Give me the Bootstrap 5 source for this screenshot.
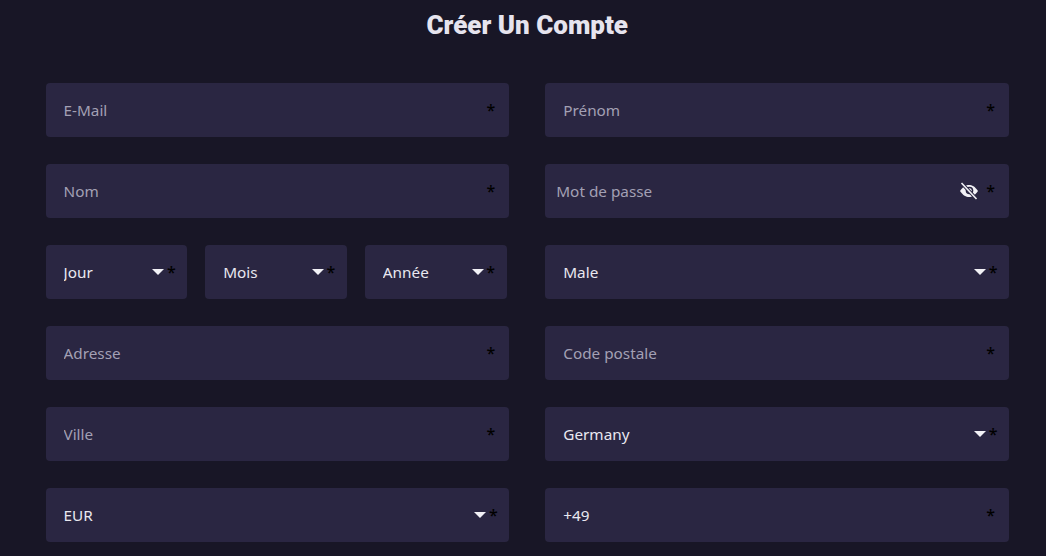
<!DOCTYPE html>
<html lang="fr">
<head>
<meta charset="utf-8">
<title>Créer Un Compte</title>
<link rel="stylesheet" href="https://cdn.jsdelivr.net/npm/bootstrap@5.3.0/dist/css/bootstrap.min.css">
<style>
html,body{height:100%;overflow:hidden}
body{background:#181626;font-family:"Noto Sans",sans-serif;color:#fff}
.signup-wrap{padding:0 37px 0 45.5px}
.signup-title{font-family:Roboto,sans-serif;font-weight:900;font-size:26px;line-height:30px;color:#e6e4ee;margin:0 0 43px;padding-top:10px}
.signup-row{--bs-gutter-x:36px;--bs-gutter-y:27px}
.fld{height:54px;background:#2a2642;border-radius:4px}
.fld .form-control,.fld .form-select{height:54px;background:transparent none;border:0;border-radius:4px;color:#e9e8f0;font-size:15.3px;font-weight:400;line-height:20px;padding:0 40px 0 18px;box-shadow:none;appearance:none}
.fld .form-control::placeholder{color:#a3a0b4;opacity:1}
.fld .form-select option{background:#2a2642}
.fld .form-control.tight{padding-left:11px}
.req{position:absolute;right:14px;top:17px;color:#000;font-size:16px;font-weight:500;line-height:20px;pointer-events:none}
.req.near{right:11.5px}
.caret{position:absolute;right:23px;top:24px;width:0;height:0;border-left:6px solid transparent;border-right:6px solid transparent;border-top:6px solid #f2f1f6;pointer-events:none}
.eye{position:absolute;right:30px;top:18px;width:20px;height:18px;pointer-events:none}
.date-grid{display:grid;grid-template-columns:repeat(3,1fr);gap:18px;padding-right:2.75px}
</style>
</head>
<body>
<div class="signup-wrap">
<h1 class="signup-title text-center">Créer Un Compte</h1>
<form>
<div class="row signup-row">
<div class="col-6"><div class="fld position-relative"><input class="form-control" type="email" placeholder="E-Mail"><span class="req">*</span></div></div>
<div class="col-6"><div class="fld position-relative"><input class="form-control" type="text" placeholder="Prénom"><span class="req">*</span></div></div>
<div class="col-6"><div class="fld position-relative"><input class="form-control" type="text" placeholder="Nom"><span class="req">*</span></div></div>
<div class="col-6"><div class="fld position-relative"><input class="form-control tight" type="password" placeholder="Mot de passe">
<svg class="eye" viewBox="0 0 20 18" fill="none"><path d="M1 9C4 4.500 7 3 10 3S16 4.500 19 9C16 13.500 13 15 10 15S4 13.500 1 9Z" fill="#f2f1f6"/><circle cx="10.500" cy="8.500" r="3.800" fill="#2a2642"/><circle cx="10.500" cy="8.500" r="2.200" fill="#f2f1f6"/><path d="M2.500 1L17.500 17" stroke="#2a2642" stroke-width="3.400"/><path d="M2.500 1L17.500 17" stroke="#f2f1f6" stroke-width="1.600"/></svg>
<span class="req">*</span></div></div>
<div class="col-6"><div class="date-grid">
<div class="fld position-relative"><select class="form-select"><option>Jour</option></select><span class="caret"></span><span class="req near">*</span></div>
<div class="fld position-relative"><select class="form-select"><option>Mois</option></select><span class="caret"></span><span class="req near">*</span></div>
<div class="fld position-relative"><select class="form-select"><option>Année</option></select><span class="caret"></span><span class="req near">*</span></div>
</div></div>
<div class="col-6"><div class="fld position-relative"><select class="form-select"><option>Male</option></select><span class="caret"></span><span class="req near">*</span></div></div>
<div class="col-6"><div class="fld position-relative"><input class="form-control" type="text" placeholder="Adresse"><span class="req">*</span></div></div>
<div class="col-6"><div class="fld position-relative"><input class="form-control" type="text" placeholder="Code postale"><span class="req">*</span></div></div>
<div class="col-6"><div class="fld position-relative"><input class="form-control" type="text" placeholder="Ville"><span class="req">*</span></div></div>
<div class="col-6"><div class="fld position-relative"><select class="form-select"><option>Germany</option></select><span class="caret"></span><span class="req near">*</span></div></div>
<div class="col-6"><div class="fld position-relative"><select class="form-select"><option>EUR</option></select><span class="caret"></span><span class="req near">*</span></div></div>
<div class="col-6"><div class="fld position-relative"><input class="form-control" type="text" value="+49"><span class="req">*</span></div></div>
</div>
</form>
</div>
<script src="https://cdn.jsdelivr.net/npm/bootstrap@5.3.0/dist/js/bootstrap.bundle.min.js"></script>
</body>
</html>
